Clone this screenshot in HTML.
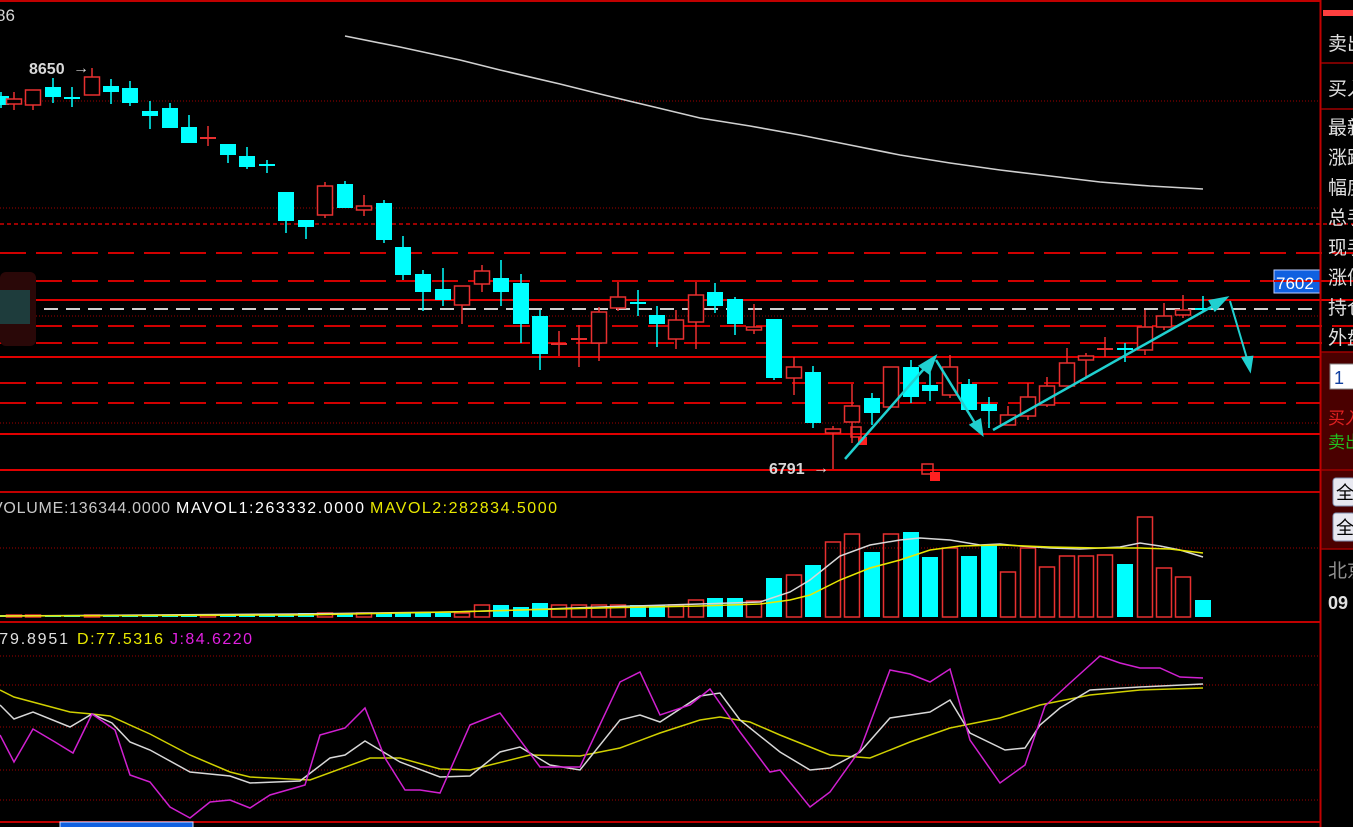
<!DOCTYPE html>
<html><head><meta charset="utf-8"><style>
html,body{margin:0;padding:0;background:#000;width:1353px;height:827px;overflow:hidden}
svg{display:block}
text{font-family:"Liberation Sans","Noto Sans CJK SC",sans-serif}
</style></head><body>
<svg id="s" width="1353" height="827" viewBox="0 0 1353 827" xmlns="http://www.w3.org/2000/svg">
<rect width="1353" height="827" fill="#000"/>
<g id="grid"></g>
<rect x="0" y="272" width="36" height="74" rx="6" fill="#2a0808"/>
<rect x="0" y="290" width="30" height="34" fill="#1c4a4a" opacity="0.8"/>
<text x="-4" y="21" font-size="17" fill="#d8d8d8">86</text>
<polyline fill="none" stroke="#d0d0d0" stroke-width="1.6" points="345,36 400,47 460,60 500,70 560,84 600,94 650,106 700,118 750,126 800,135 850,145 900,155 950,163 1000,170 1050,176 1100,182 1150,186 1203,189"/>
<g id="candles"></g>
<g id="arrows" stroke="#20d0d0" stroke-width="2.5" fill="#20d0d0">
<line x1="845" y1="459" x2="930" y2="362"/><polygon points="935,357 920,366 929,373"/>
<line x1="936" y1="360" x2="978" y2="428"/><polygon points="982,434 971,425 980,420"/>
<line x1="993" y1="430" x2="1220" y2="302"/><polygon points="1226,298 1210,301 1215,310"/>
<line x1="1230" y1="301" x2="1248" y2="362" stroke-width="2"/><polygon points="1250,370 1243,358 1252,357"/>
</g>
<text x="29" y="74" font-size="16" font-weight="bold" fill="#d8d8d8">8650</text>
<text x="73" y="73" font-size="16" fill="#d8d8d8">→</text>
<text x="769" y="474" font-size="16" font-weight="bold" fill="#d8d8d8">6791</text>
<text x="813" y="473" font-size="16" fill="#d8d8d8">→</text>
<rect x="1274" y="270" width="46" height="23" fill="#1060e0" stroke="#c0d0ff" stroke-width="1"/>
<line x1="1274" y1="281" x2="1353" y2="281" stroke="#d00000" stroke-width="2"/>
<text x="1276" y="289" font-size="17" fill="#fff">7602</text>
<g id="vol"></g>
<text x="-8" y="513" font-size="16" fill="#c8c8c8" textLength="178">VOLUME:136344.0000</text>
<text x="176" y="513" font-size="16" fill="#ffffff" textLength="188">MAVOL1:263332.0000</text>
<text x="370" y="513" font-size="16" fill="#e8e800" textLength="187">MAVOL2:282834.5000</text>
<g id="kdj"></g>
<text x="-7" y="644" font-size="16" fill="#e0e0e0" textLength="75">:79.8951</text>
<text x="77" y="644" font-size="16" fill="#e8e800" textLength="86">D:77.5316</text>
<text x="170" y="644" font-size="16" fill="#e020e0" textLength="82">J:84.6220</text>
<rect x="60" y="822" width="133" height="6" fill="#1060e0" stroke="#d0e0ff" stroke-width="1"/>
<rect x="1321" y="352" width="32" height="197" fill="#4a0000"/>
<line x1="1320.5" y1="0" x2="1320.5" y2="827" stroke="#c00000" stroke-width="2"/>
<rect x="1323" y="10" width="30" height="6" fill="#ff4040"/>
<g stroke="#a00000" stroke-width="1.5">
<line x1="1321" y1="63" x2="1353" y2="63"/><line x1="1321" y1="109" x2="1353" y2="109"/>
<line x1="1321" y1="352" x2="1353" y2="352"/><line x1="1321" y1="470" x2="1353" y2="470"/>
<line x1="1321" y1="549" x2="1353" y2="549"/>
</g>
<g font-size="19" fill="#e0e0e0">
<text x="1328" y="50">卖出</text><text x="1328" y="95">买入</text>
<text x="1328" y="134">最新</text><text x="1328" y="164">涨跌</text><text x="1328" y="194">幅度</text>
<text x="1328" y="224">总手</text><text x="1328" y="254">现手</text><text x="1328" y="284">涨停</text>
<text x="1328" y="314">持仓</text><text x="1328" y="344">外盘</text>
<text x="1328" y="577" fill="#909090">北京</text>
</g>
<rect x="1330" y="364" width="25" height="25" fill="#fff" stroke="#888"/>
<text x="1334" y="384" font-size="18" fill="#1040a0">1</text>
<text x="1328" y="424" font-size="17" fill="#e02020">买入</text>
<text x="1328" y="448" font-size="17" fill="#20c020">卖出</text>
<rect x="1333" y="478" width="22" height="28" rx="3" fill="#e8e8f0" stroke="#8090b0"/>
<rect x="1333" y="513" width="22" height="28" rx="3" fill="#e8e8f0" stroke="#8090b0"/>
<text x="1336" y="499" font-size="18" fill="#000">全</text>
<text x="1336" y="534" font-size="18" fill="#000">全</text>
<text x="1328" y="609" font-size="18" font-weight="bold" fill="#e0e0e0">09</text>
</svg>
<script>
var NS="http://www.w3.org/2000/svg";
function el(p,t,a){var e=document.createElementNS(NS,t);for(var k in a)e.setAttribute(k,a[k]);p.appendChild(e);return e;}
var g=document.getElementById('grid');
function hl(y,dash,w,col,x2){el(g,'line',{x1:0,y1:y,x2:x2||1353,y2:y,stroke:col||'#d00000','stroke-width':w||1.5,'stroke-dasharray':dash||''});}
[101,208,316,423].forEach(function(y){hl(y,'1 2',1,'#a00000',1320)});
hl(224,'4 3',1.5);
[253,281,326,343,383,403].forEach(function(y){hl(y,'26 10',2)});
[300,357,434,470].forEach(function(y){hl(y,'',2,'#e00000')});
hl(309,'14 8',2,'#d0d0d0',1320);
hl(1,'',2,'#c00000',1320);hl(492,'',2,'#c00000',1320);hl(622,'',2,'#c00000',1320);hl(822,'',2,'#c00000',1320);
hl(548,'1 2',1,'#a00000',1320);
[656,685,727,770,800].forEach(function(y){hl(y,'1 2',1,'#a00000',1320)});
var C=[[1,96,105,92,108,'c'],[14,99,104,92,110,'r'],[33,90,105,90,110,'r'],[53,87,97,78,103,'c'],[72,98,98,87,107,'c'],[92,77,95,68,95,'r'],[111,86,92,79,104,'c'],[130,88,103,81,106,'c'],[150,111,116,101,129,'c'],[170,108,128,103,128,'c'],[189,127,143,115,143,'c'],[208,138,138,126,146,'r'],[228,144,155,144,163,'c'],[247,156,167,147,169,'c'],[267,165,165,160,173,'c'],[286,192,221,192,233,'c'],[306,220,227,220,239,'c'],[325,186,215,182,218,'r'],[345,184,208,181,208,'c'],[364,206,210,195,216,'r'],[384,203,240,200,243,'c'],[403,247,275,236,280,'c'],[423,274,292,270,311,'c'],[443,289,300,268,306,'c'],[462,286,305,286,324,'r'],[482,271,284,265,292,'r'],[501,278,292,260,306,'c'],[521,283,324,274,343,'c'],[540,316,354,310,370,'c'],[559,344,344,331,356,'r'],[579,339,339,325,367,'r'],[599,312,343,307,361,'r'],[618,297,308,282,311,'r'],[638,303,303,290,316,'c'],[657,315,324,306,347,'c'],[676,320,339,310,349,'r'],[696,295,322,282,349,'r'],[715,292,306,283,313,'c'],[735,299,324,297,335,'c'],[754,327,330,304,334,'r'],[774,319,378,319,380,'c'],[794,367,378,357,395,'r'],[813,372,423,366,428,'c'],[833,429,433,426,469,'r'],[852,406,422,384,443,'r'],[872,398,413,393,425,'c'],[891,367,407,367,407,'r'],[911,367,397,360,403,'c'],[930,385,391,372,401,'c'],[950,367,395,355,398,'r'],[969,384,410,379,410,'c'],[989,404,411,397,428,'c'],[1008,415,425,406,425,'r'],[1028,397,416,383,420,'r'],[1047,386,405,377,407,'r'],[1067,363,386,348,386,'r'],[1086,356,360,353,378,'r'],[1105,349,349,337,357,'r'],[1125,349,349,343,362,'c'],[1145,327,350,310,355,'r'],[1164,316,327,303,330,'r'],[1183,310,315,295,318,'r'],[1203,309,309,296,312,'c']];
var cg=document.getElementById('candles');
C.forEach(function(c){var col=c[5]=='r'?'#e83030':'#00ffff';
el(cg,'line',{x1:c[0],y1:c[3],x2:c[0],y2:c[4],stroke:col,'stroke-width':1.5});
var h=c[2]-c[1];
if(h<1){el(cg,'line',{x1:c[0]-8,y1:c[1],x2:c[0]+8,y2:c[1],stroke:col,'stroke-width':2});}
else if(c[5]=='r'){el(cg,'rect',{x:c[0]-7.5,y:c[1],width:15,height:h,fill:'#000',stroke:col,'stroke-width':1.5});}
else{el(cg,'rect',{x:c[0]-8,y:c[1],width:16,height:h,fill:col});}
});
el(cg,'rect',{x:851,y:427,width:10,height:10,fill:'none',stroke:'#e83030','stroke-width':1.5});
el(cg,'rect',{x:858,y:437,width:9,height:8,fill:'#ff2020'});
el(cg,'rect',{x:922,y:464,width:11,height:10,fill:'none',stroke:'#e83030','stroke-width':1.5});
el(cg,'rect',{x:930,y:472,width:10,height:9,fill:'#ff2020'});
var vg=document.getElementById('vol');
var tops=[578,575,565,542,534,552,534,532,557,548,556,545,572,548,567,556,556,555,564,517,568,577,600];
var n=C.length;
C.forEach(function(c,i){var t;var j=i-(n-tops.length);
if(j>=0)t=tops[j];else{t=c[0]<300?615:(c[0]<480?613:(c[0]<560?605:(c[0]<700?605:601)));
if(c[0]==540)t=603;if(c[0]==521)t=607;if(c[0]==696)t=600;if(c[0]==715||c[0]==735)t=598;if(c[0]==754)t=601;}
var col=c[5]=='r'?'#e83030':'#00ffff';
if(c[5]=='r')el(vg,'rect',{x:c[0]-7.5,y:t,width:15,height:617-t,fill:'none',stroke:col,'stroke-width':1.5});
else el(vg,'rect',{x:c[0]-8,y:t,width:16,height:617-t,fill:col});
});
function pl(p,pts,col,w){el(p,'polyline',{points:pts,fill:'none',stroke:col,'stroke-width':w||1.5});}
pl(vg,'0,616 300,614 450,612 520,610 600,607 700,604 760,602 790,592 810,580 840,556 870,545 900,540 920,538 950,540 980,545 1000,544 1020,546 1050,548 1080,549 1100,548 1120,547 1140,543 1160,546 1180,550 1203,557','#d8d8d8',1.5);
pl(vg,'0,616 300,615 450,612 520,610 600,608 700,606 760,604 790,600 810,595 840,580 870,568 900,560 930,550 960,546 1000,545 1050,547 1100,548 1140,548 1170,549 1203,553','#e8e800',1.5);
var kg=document.getElementById('kdj');
pl(kg,'0,690 14,697 70,712 92,714 110,716 150,734 190,755 230,772 250,777 310,780 370,758 400,758 440,769 470,770 530,755 580,756 620,748 660,733 700,720 720,717 750,722 780,735 830,755 870,758 910,742 950,728 1000,718 1040,705 1090,695 1140,690 1203,688','#d0d000');
pl(kg,'0,705 14,719 33,712 70,727 92,714 112,723 130,742 150,750 190,772 230,776 250,783 300,781 330,758 345,755 365,741 400,762 440,777 470,776 500,752 520,747 550,765 580,770 620,720 640,715 660,722 700,696 720,693 740,720 780,752 810,770 830,768 860,752 890,718 930,712 950,700 970,733 1005,750 1025,748 1040,725 1060,708 1090,690 1140,687 1203,684','#d8d8d8');
pl(kg,'0,735 14,762 33,729 55,742 73,753 92,714 115,730 130,775 150,782 170,807 190,818 210,802 230,800 250,808 270,795 305,785 320,735 345,728 365,708 385,758 405,790 420,790 440,793 470,725 500,713 540,767 580,767 620,682 640,672 660,715 690,705 710,689 740,732 770,772 780,770 810,807 830,792 860,750 890,670 910,674 930,682 950,669 970,740 1000,783 1025,765 1045,706 1070,683 1100,656 1120,663 1140,668 1160,668 1180,677 1203,678','#d020d0');
</script>
</body></html>
